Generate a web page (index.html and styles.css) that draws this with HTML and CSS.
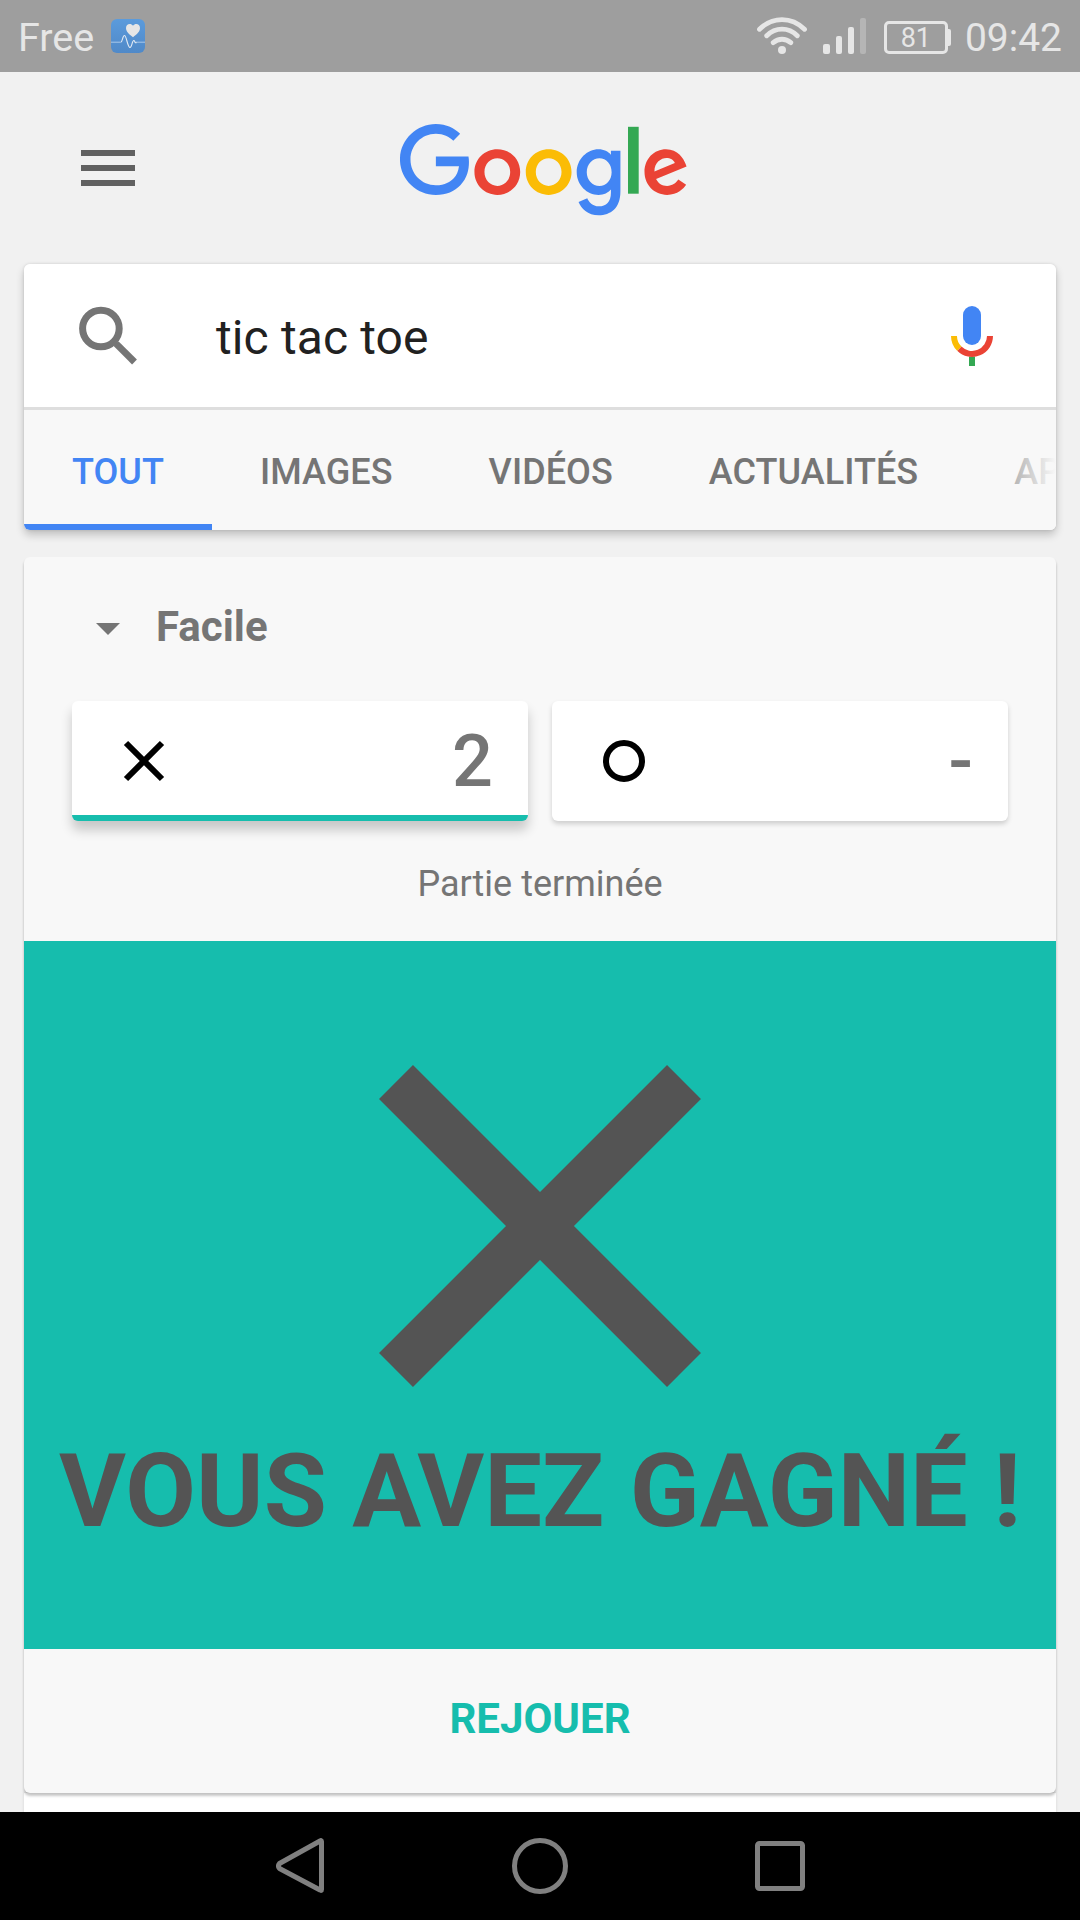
FILE: index.html
```html
<!DOCTYPE html>
<html lang="fr">
<head>
<meta charset="utf-8">
<title>tic tac toe</title>
<link rel="stylesheet" href="styles.css">
</head>
<body>
<div class="status-bar">
  <span class="carrier">Free</span>
  <svg class="health-icon" width="34" height="34" viewBox="0 0 34 34">
    <defs><linearGradient id="health" x1="0" y1="0" x2="0" y2="1"><stop offset="0" stop-color="#5b9bdc"/><stop offset="1" stop-color="#5089c8"/></linearGradient></defs>
    <rect width="34" height="34" rx="6" fill="url(#health)"/>
    <path d="M22 18.200C18 15.200 15 12.500 15 9C15 4.600 20 3.800 22 6.800C24 3.800 29 4.600 29 9C29 12.500 26 15.200 22 18.200Z" fill="#e6e6e6"/>
    <path d="M0 23.200H10M25 23.200H34" stroke="#a9c9ea" stroke-width="1"/>
    <path d="M10 23C11.500 23 11.500 16.500 13.500 16.500C15.500 16.500 16.500 28.500 19 28.500C21 28.500 21 21.500 22.800 21.500C24 21.500 23.500 24.500 25.500 23.500" fill="none" stroke="#e2eaf3" stroke-width="1.100"/>
  </svg>
  <div class="status-right">
    <svg class="wifi" width="50" height="38" viewBox="0 0 50 38" fill="none" stroke="#e6e6e6" stroke-width="4.800" stroke-linecap="round">
      <path d="M2.500 12.300C15.500-.600 34.500-.600 47.500 12.300M9.700 18.800C18.500 10 31.500 10 40.300 18.800M16.200 25.600C21.500 21.100 28.500 21.100 33.800 25.600"/>
      <circle cx="25" cy="33" r="4" fill="#e6e6e6" stroke="none"/>
    </svg>
    <svg class="signal" width="44" height="36" viewBox="0 0 44 36" fill="#e6e6e6">
      <rect x="0" y="26" width="7" height="10" rx="2"/><rect x="13" y="18" width="6" height="18" rx="2"/><rect x="25" y="9" width="6" height="27" rx="2"/><rect x="37" y="0" width="6" height="36" rx="2" fill="#b5b5b5"/>
    </svg>
    <div class="battery">81</div>
    <span class="clock">09:42</span>
  </div>
</div>

<main class="page">
  <header class="top">
    <button class="menu" aria-label="Menu"><span></span><span></span><span></span></button>
    <svg class="logo" width="288" height="92" viewBox="0 0 288 92" role="img" aria-label="Google">
      <path transform="translate(-.4 -.4) scale(1.028)" fill="#4285F4" d="M35.290 41.410V32H67c.31 1.640.47 3.580.47 5.680 0 7.060-1.930 15.790-8.150 22.010-6.050 6.300-13.780 9.660-24.020 9.660C16.320 69.350.36 53.890.36 34.910.36 15.930 16.320.47 35.300.47c10.500 0 17.980 4.120 23.600 9.490l-6.640 6.640c-4.030-3.780-9.490-6.720-16.970-6.720-13.860 0-24.700 11.170-24.700 25.030 0 13.860 10.840 25.030 24.700 25.030 8.990 0 14.110-3.610 17.390-6.890 2.660-2.660 4.410-6.460 5.100-11.650l-22.490.01z"/>
      <path transform="translate(1.200 -.4) scale(1.028)" fill="#EA4335" d="M115.750 47.180c0 12.770-9.990 22.180-22.250 22.180s-22.250-9.410-22.250-22.180C71.250 34.320 81.240 25 93.500 25s22.250 9.320 22.250 22.180zm-9.740 0c0-7.980-5.790-13.440-12.510-13.440S80.990 39.200 80.990 47.180c0 7.900 5.790 13.440 12.510 13.440s12.510-5.550 12.510-13.440z"/>
      <path transform="translate(3.200 -.4) scale(1.028)" fill="#FBBC05" d="M163.750 47.180c0 12.770-9.990 22.180-22.250 22.180s-22.250-9.410-22.250-22.180c0-12.850 9.990-22.180 22.250-22.180s22.250 9.320 22.250 22.180zm-9.740 0c0-7.980-5.790-13.440-12.510-13.440s-12.510 5.460-12.510 13.440c0 7.900 5.790 13.440 12.510 13.440s12.510-5.550 12.510-13.440z"/>
      <path transform="translate(4.800 -.4) scale(1.028)" fill="#4285F4" d="M209.750 26.340v39.820c0 16.380-9.660 23.070-21.080 23.070-10.750 0-17.220-7.190-19.660-13.070l8.480-3.530c1.510 3.610 5.210 7.870 11.170 7.870 7.310 0 11.840-4.510 11.840-13v-3.190h-.34c-2.180 2.690-6.380 5.040-11.680 5.040-11.090 0-21.250-9.660-21.250-22.090 0-12.520 10.160-22.260 21.250-22.260 5.290 0 9.490 2.350 11.680 4.960h.34v-3.610h9.250zm-8.560 20.920c0-7.810-5.210-13.520-11.840-13.520-6.720 0-12.350 5.710-12.350 13.520 0 7.730 5.630 13.360 12.350 13.360 6.630 0 11.840-5.630 11.840-13.360z"/>
      <path fill="#34A853" d="M228 2.800h10.700v66.900H228z"/>
      <path transform="translate(9 -.4) scale(1.028)" fill="#EA4335" d="M262.020 54.480l7.560 5.040c-2.440 3.610-8.320 9.830-18.480 9.830-12.600 0-22.010-9.740-22.010-22.180 0-13.190 9.490-22.180 20.920-22.180 11.510 0 17.140 9.160 18.980 14.110l1.010 2.520-29.650 12.280c2.270 4.450 5.800 6.720 10.750 6.720 4.960 0 8.400-2.440 10.920-6.140zm-23.270-7.980l19.820-8.230c-1.090-2.770-4.370-4.700-8.230-4.700-4.950 0-11.840 4.370-11.590 12.930z"/>
    </svg>
  </header>

  <section class="search-card">
    <div class="search-row">
      <svg class="search-icon" width="60" height="60" viewBox="0 0 60 60" fill="none" stroke="#757575">
        <circle cx="22.900" cy="22.500" r="18.300" stroke-width="7"/>
        <path d="M38.300 37.800L56.500 56" stroke-width="6.800"/>
        <path d="M36 36l4 4" stroke-width="5"/>
      </svg>
      <span class="query">tic tac toe</span>
      <svg class="mic" width="42" height="60" viewBox="0 0 42 60" fill="none" stroke-width="6">
        <rect x="12" y="0" width="18" height="39" rx="9" fill="#4285F4"/>
        <path d="M21 50.500V60" stroke="#34A853"/>
        <path d="M39 30A18 18 0 0 1 8.300 42.700" stroke="#EA4335"/>
        <path d="M3 30A18 18 0 0 0 8.300 42.700" stroke="#FBBC05"/>
      </svg>
    </div>
    <nav class="tabs">
      <span class="tab active">TOUT</span><span class="tab">IMAGES</span><span class="tab">VIDÉOS</span><span class="tab">ACTUALITÉS</span><span class="tab">APPLIS</span>
    </nav>
  </section>

  <section class="game">
    <div class="level"><span class="caret"></span>Facile</div>
    <div class="scores">
      <div class="score current">
        <svg width="42" height="42" viewBox="0 0 42 42"><path d="M3 3L39 39M39 3L3 39" stroke="#000" stroke-width="6"/></svg>
        <span>2</span>
      </div>
      <div class="score">
        <svg width="42" height="42" viewBox="0 0 42 42"><circle cx="21" cy="21" r="18" fill="none" stroke="#000" stroke-width="6"/></svg>
        <span>-</span>
      </div>
    </div>
    <p class="state">Partie terminée</p>
    <div class="result">
      <svg width="322" height="322" viewBox="0 0 322 322"><path d="M17 17L305 305M305 17L17 305" stroke="#545454" stroke-width="48"/></svg>
      <p>VOUS AVEZ GAGNÉ !</p>
    </div>
    <button class="replay">REJOUER</button>
  </section>
  <section class="next-card"></section>
</main>

<footer class="nav-bar">
  <svg width="530" height="58" viewBox="0 0 530 58" fill="none" stroke="#808080" stroke-width="5" stroke-linejoin="round">
    <path d="M45.500 4.500V52.500Q45.500 54 44 53L3.500 31.500Q1.500 29 3.500 26.500L44 4Q45.500 3 45.500 4.500Z"/>
    <circle cx="264" cy="29" r="25.500"/>
    <rect x="481.500" y="6.500" width="45" height="45" rx="2"/>
  </svg>
</footer>
</body>
</html>
```
FILE: styles.css
```css
* { box-sizing: border-box; }
body {
  margin: 0;
  height: 1920px;
  display: flex;
  flex-direction: column;
  overflow: hidden;
  background: #f1f1f1;
  font-family: Roboto, "Liberation Sans", sans-serif;
  color: #757575;
}
p { margin: 0; }
svg { display: block; flex: none; }
button { border: 0; background: none; padding: 0; font: inherit; color: inherit; }

.status-bar {
  height: 72px;
  flex: none;
  display: flex;
  align-items: center;
  padding: 0 18px;
  background: #9e9e9e;
  color: #e6e6e6;
  font-size: 39px;
}
.carrier { width: 93px; padding-top: 2px; font-size: 39.5px; }
.status-right { margin-left: auto; display: flex; align-items: center; }
.wifi { margin-right: 16px; }
.signal { margin-right: 17px; }
.battery {
  position: relative;
  width: 64px;
  height: 33px;
  margin: 3px 17px 0 0;
  border: 3px solid #e6e6e6;
  border-radius: 5px;
  font-size: 27px;
  line-height: 28px;
  text-align: center;
}
.battery::after {
  content: "";
  position: absolute;
  right: -6px;
  top: 5px;
  width: 4px;
  height: 17px;
  border-radius: 0 2px 2px 0;
  background: #e6e6e6;
}
.clock { padding-top: 3px; }

.page { flex: 1; min-height: 0; padding: 0 24px; overflow: hidden; }
.top { height: 192px; display: flex; align-items: flex-start; padding-left: 57px; }
.menu { width: 54px; margin: 78px 265px 0 0; display: grid; gap: 9px; }
.menu span { height: 6px; background: #616161; }
.logo { margin-top: 52px; }

.search-card {
  height: 266px;
  border-radius: 6px;
  box-shadow: 0 0 3px rgba(0, 0, 0, .12), 0 5px 9px rgba(0, 0, 0, .2);
  overflow: hidden;
}
.search-row {
  height: 146px;
  display: flex;
  align-items: center;
  padding: 0 63px 0 54px;
  background: #fff;
  border-bottom: 3px solid #dedede;
}
.query {
  flex: 1;
  margin-left: 78px;
  padding-top: 3px;
  font-size: 48px;
  letter-spacing: .12px;
  color: #212121;
}
.tabs {
  position: relative;
  height: 120px;
  display: flex;
  background: #f8f8f8;
  overflow: hidden;
  font-size: 36px;
  font-weight: 500;
  letter-spacing: .06px;
}
.tabs::after {
  content: "";
  position: absolute;
  inset: 0 0 0 auto;
  width: 84px;
  background: linear-gradient(to right, rgba(248, 248, 248, 0), #f8f8f8);
}
.tab { flex: none; height: 120px; padding: 0 48px; line-height: 124px; }
.tab.active { color: #4285f4; border-bottom: 6px solid #4285f4; }

.game {
  position: relative;
  height: 1236px;
  margin-top: 27px;
  display: flex;
  flex-direction: column;
  border-radius: 6px;
  background: #f8f8f8;
  box-shadow: 0 2px 3px rgba(0, 0, 0, .08), 0 3px 3px rgba(0, 0, 0, .18);
}
.level {
  height: 144px;
  display: flex;
  align-items: center;
  padding: 0 72px 6px;
  font-size: 42px;
  font-weight: 700;
}
.caret {
  margin: 6px 36px 0 0;
  border: 12px solid transparent;
  border-top-color: #757575;
  border-bottom: 0;
}
.scores { display: grid; grid-template-columns: 1fr 1fr; gap: 24px; padding: 0 48px; }
.score {
  height: 120px;
  display: flex;
  align-items: center;
  justify-content: space-between;
  padding: 0 35px 0 51px;
  border-radius: 6px;
  background: #fff;
  font-size: 72px;
  font-weight: 500;
  box-shadow: 0 3px 5px rgba(0, 0, 0, .17);
}
.score.current {
  padding-top: 6px;
  border-bottom: 6px solid #17bdad;
  box-shadow: 0 9px 12px rgba(0, 0, 0, .2);
}
.state { height: 120px; line-height: 127px; font-size: 36px; text-align: center; }
.result {
  height: 708px;
  display: flex;
  flex-direction: column;
  align-items: center;
  padding-top: 124px;
  background: #16bdad;
  color: #545454;
  white-space: nowrap;
}
.result p { margin-top: 44px; font-size: 102.6px; font-weight: 700; line-height: 120px; }
.replay { height: 144px; padding-bottom: 6px; font-size: 42px; font-weight: 700; color: #16bdad; }
.next-card { height: 30px; background: #fff; box-shadow: 0 0 3px rgba(0, 0, 0, .12); }

.nav-bar { height: 108px; flex: none; padding: 25px 0 0 276px; background: #000; }
```
